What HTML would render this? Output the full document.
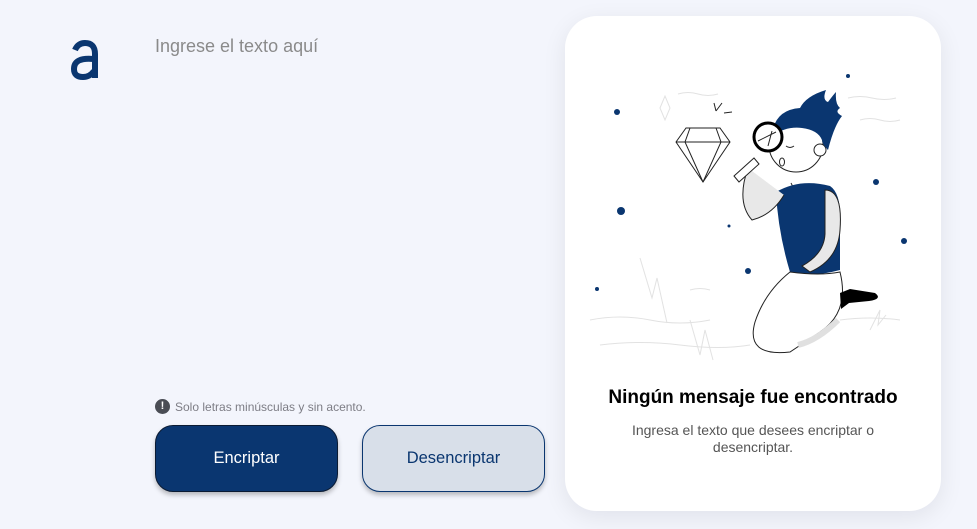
<!DOCTYPE html>
<html><head><meta charset="utf-8"><style>
html,body{margin:0;padding:0;width:977px;height:529px;overflow:hidden;background:#f3f5fc;font-family:"Liberation Sans",sans-serif;}
.logo{position:absolute;left:70px;top:40px;}
.ph{position:absolute;left:155px;top:36px;font-size:18px;color:#8a8a8a;}
.note{position:absolute;left:155px;top:399px;font-size:12px;color:#7d7d85;display:flex;align-items:center;gap:5px;}
.note i{display:inline-block;width:15px;height:15px;border-radius:50%;background:#4a4d55;color:#fff;font-style:normal;font-weight:bold;font-size:11px;text-align:center;line-height:15px;}
.btn{position:absolute;top:425px;width:183px;height:67px;border-radius:18px;box-sizing:border-box;font-size:16.5px;display:flex;align-items:center;justify-content:center;box-shadow:0 3px 5px rgba(0,0,0,.25);}
.b1{left:155px;background:#0a3670;color:#fff;border:1.5px solid #0b1b33;}
.b2{left:362px;background:#d8dfe9;color:#0a3670;border:1.5px solid #0a3670;}
.card{position:absolute;left:565px;top:16px;width:376px;height:495px;background:#fff;border-radius:32px;box-shadow:0 6px 24px rgba(0,0,30,.08);}
.t1{position:absolute;left:565px;width:376px;top:387px;text-align:center;font-weight:bold;font-size:19px;color:#000;}
.t2{position:absolute;left:610px;width:286px;top:422px;text-align:center;font-size:14px;color:#555;line-height:17px;}
svg.ill{position:absolute;left:0;top:0;}
</style></head><body>
<svg class="logo" width="30" height="40" viewBox="0 0 30 40"><path d="M5 10 Q8 3 15 3 Q25 3 25 14 L25 38" fill="none" stroke="#0a3670" stroke-width="6"/><path d="M24 19 Q4 17 4 29 Q4 37 13 37 Q20 37 24 31" fill="none" stroke="#0a3670" stroke-width="6"/></svg>
<div class="ph">Ingrese el texto aquí</div>
<div class="note"><i>!</i>Solo letras minúsculas y sin acento.</div>
<div class="btn b1">Encriptar</div>
<div class="btn b2">Desencriptar</div>
<div class="card"></div>
<svg class="ill" width="977" height="529" viewBox="0 0 977 529">
<g stroke="#e2e2e2" fill="none" stroke-width="1">
<path d="M678 94 q10 -3 20 0 t20 0"/><path d="M848 98 q12 -3 24 0 t24 0"/><path d="M860 120 q10 -3 20 0 t20 0"/><path d="M640 258 l12 40 l5 -20 l10 45"/><path d="M590 320 q30 -6 60 0 t60 0"/><path d="M600 345 q40 -5 80 0 t70 0"/><path d="M690 290 q10 -3 20 0"/><path d="M690 320 l10 35 l5 -25 l8 30"/><path d="M870 330 l10 -20 l-2 15 l8 -10"/><path d="M840 320 q30 -4 60 0"/><path d="M660 108 l5 -12 l5 12 l-5 12z"/>
</g>
<g fill="#0a3670"><circle cx="617" cy="112" r="3"/><circle cx="848" cy="76" r="2"/><circle cx="621" cy="211" r="4"/><circle cx="876" cy="182" r="3"/><circle cx="904" cy="241" r="3"/><circle cx="748" cy="271" r="3"/><circle cx="597" cy="289" r="2"/><circle cx="729" cy="226" r="1.5"/></g>
<g fill="none" stroke="#222" stroke-width="1"><path d="M676 142 l10 -14 h34 l10 14 l-27 40z"/><path d="M676 142 h54 M690 128 l-5 14 l18 40 M716 128 l5 14 l-18 40"/><path d="M714 103 l2 8 M722 103 l-6 8 M724 113 l8 -1"/></g>
<path d="M791 183 q5 8 -4 18 l-5 -10" fill="#fff" stroke="#222"/>
<path d="M776 192 q24 -14 54 -6 q12 8 10 40 l0 44 q-30 8 -50 2 q-12 -40 -14 -80z" fill="#0a3670"/>
<path d="M748 168 q-12 34 4 52 q20 -5 32 -25" fill="#e8e8e8" stroke="#222"/>
<path d="M734 176 l20 -18 l5 6 l-20 18 z" fill="#fff" stroke="#222"/>
<path d="M825 190 q18 0 15 40 q-2 30 -30 42 l-8 -6 q22 -12 23 -32z" fill="#e8e8e8" stroke="#222"/>
<path d="M790 272 q30 4 50 0 q10 40 -20 60 l-30 20 q-45 5 -35 -30 q10 -30 35 -50z" fill="#fff" stroke="#222"/>
<path d="M838 320 q-20 20 -40 25" stroke="#e0e0e0" stroke-width="6" fill="none"/>
<path d="M840 293 l10 -4 l25 4 q8 6 -6 8 l-20 2 l-8 6z" fill="#000"/>
<circle cx="796" cy="145" r="27" fill="#fff" stroke="#222"/>
<circle cx="820" cy="150" r="6" fill="#fff" stroke="#222"/>
<path d="M772 136 q2 -26 28 -28 q6 -12 26 -18 q-4 10 2 12 q6 -8 8 -10 q-1 12 4 16 q-6 4 2 8 q-8 10 -14 34 q-6 -6 -6 -10 q-4 -10 -20 -12 q-16 -2 -30 8z" fill="#0a3670"/>
<ellipse cx="782" cy="162" rx="2.5" ry="4" fill="none" stroke="#222"/>
<path d="M786 146 q4 3 8 0" fill="none" stroke="#222"/>
<circle cx="768" cy="137" r="14" fill="#fff" stroke="#000" stroke-width="3"/>
<path d="M758 141 l18 -9 M768 146 l4 -15" stroke="#222" fill="none"/>
</svg>
<div class="t1">Ningún mensaje fue encontrado</div>
<div class="t2">Ingresa el texto que desees encriptar o desencriptar.</div>
</body></html>
